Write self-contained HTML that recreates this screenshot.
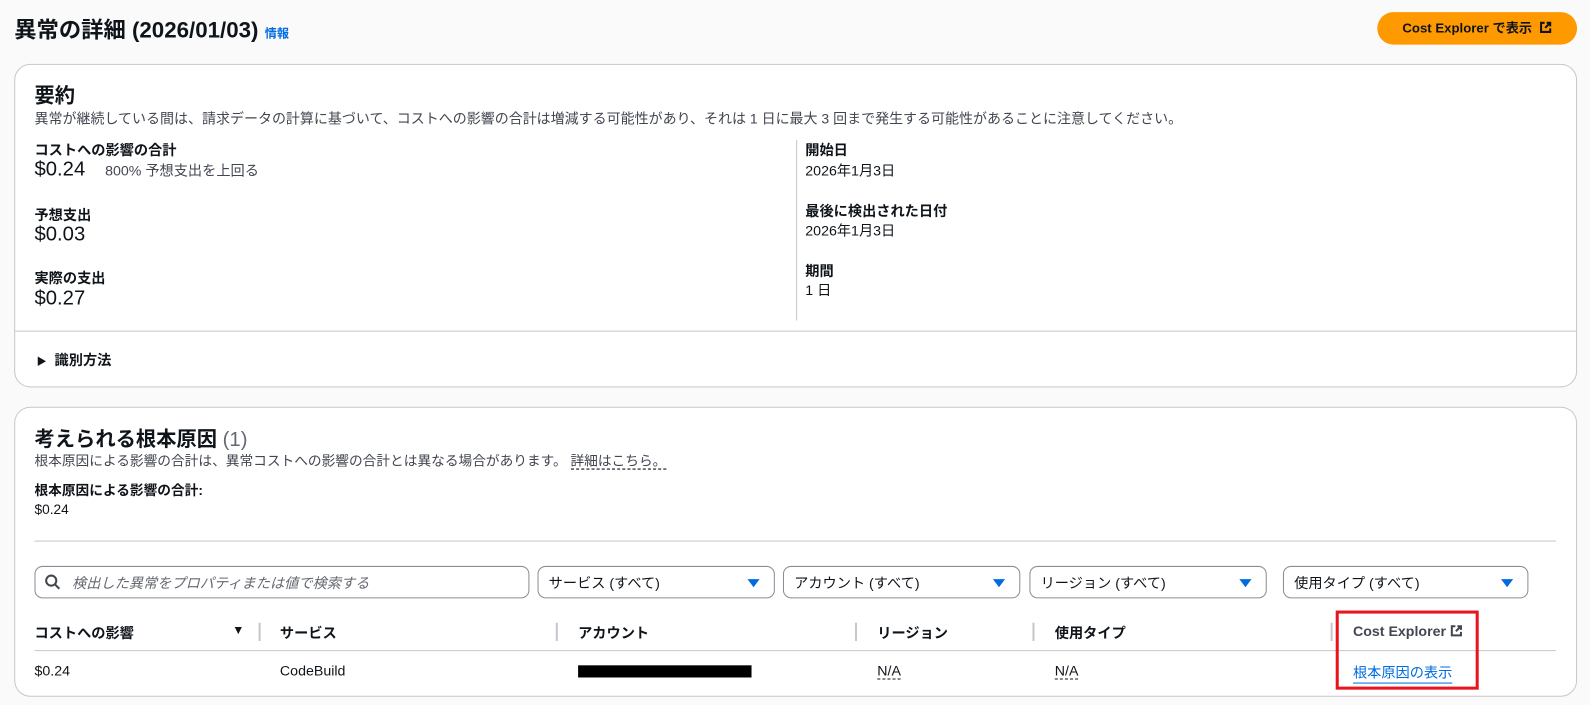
<!DOCTYPE html>
<html><head><meta charset="utf-8"><style>
*{box-sizing:border-box;margin:0;padding:0}
body{width:1590px;height:705px;background:#fafafa;font-family:"Liberation Sans","Noto Sans CJK JP",sans-serif;color:#0f141a;overflow:hidden;font-size:14px}
#w{position:absolute;left:0;top:0;width:1568px;height:695px;transform:scale(1.0142);transform-origin:0 0}
.a{position:absolute;white-space:nowrap}
.card{position:absolute;left:14px;width:1541px;background:#fff;border:1px solid #c6c6cd;border-radius:16px}
.b{font-weight:700}
.sel{position:absolute;top:558px;height:32px;border:1px solid #8c8c94;border-radius:8px;background:#fff;padding:6px 10px;font-size:14px;color:#0f141a}
.sel .tri{position:absolute;right:14px;top:12px;width:0;height:0;border-left:6px solid transparent;border-right:6px solid transparent;border-top:8px solid #006ce0}
.sep{position:absolute;top:614px;width:2px;height:18px;background:#c6c6cd}
.lk{color:#006ce0}
.dot{border-bottom:1px dashed #0f141a}
</style></head><body><div id="w">
<div class="a b" style="left:14px;top:12px;font-size:22px">異常の詳細 (2026/01/03) <span class="lk" style="font-size:12px;font-weight:700">情報</span></div>
<div class="a b" style="left:1358px;top:12px;width:197px;height:32px;background:#ff9900;border-radius:16px;font-size:13px;text-align:center;line-height:32px">Cost Explorer で表示 <svg width="12" height="12" viewBox="0 0 12 12" style="vertical-align:-1px;margin-left:4px"><path d="M5 1.5H1.5v9h9V7M7 1.5h3.5V5M10.5 1.5 5.5 6.5" fill="none" stroke="#0f141a" stroke-width="2"/></svg></div>

<div class="card" style="top:63px;height:319px"></div>
<div class="a b" style="left:34px;top:78px;font-size:20px">要約</div>
<div class="a" style="left:34px;top:106px;font-size:13.8px;color:#424650">異常が継続している間は、請求データの計算に基づいて、コストへの影響の合計は増減する可能性があり、それは 1 日に最大 3 回まで発生する可能性があることに注意してください。</div>
<div class="a b" style="left:34px;top:138px;font-size:14px">コストへの影響の合計</div>
<div class="a" style="left:34px;top:156px;font-size:20px">$0.24 <span style="font-size:14px;color:#424650;margin-left:14px">800% 予想支出を上回る</span></div>
<div class="a b" style="left:34px;top:202px">予想支出</div>
<div class="a" style="left:34px;top:220px;font-size:20px">$0.03</div>
<div class="a b" style="left:34px;top:264px">実際の支出</div>
<div class="a" style="left:34px;top:283px;font-size:20px">$0.27</div>
<div class="a" style="left:785px;top:138px;width:1px;height:178px;background:#c6c6cd"></div>
<div class="a b" style="left:794px;top:138px">開始日</div>
<div class="a" style="left:794px;top:158px">2026年1月3日</div>
<div class="a b" style="left:794px;top:198px">最後に検出された日付</div>
<div class="a" style="left:794px;top:217px">2026年1月3日</div>
<div class="a b" style="left:794px;top:257px">期間</div>
<div class="a" style="left:794px;top:276px">1 日</div>
<div class="a" style="left:15px;top:326px;width:1539px;height:1px;background:#c6c6cd"></div>
<div class="a b" style="left:36px;top:345px;font-size:14px"><span style="font-size:10px">▶</span>&nbsp; 識別方法</div>

<div class="card" style="top:401px;height:286px"></div>
<div class="a b" style="left:34px;top:417px;font-size:20px">考えられる根本原因 <span style="font-weight:400;color:#656871">(1)</span></div>
<div class="a" style="left:34px;top:443px;font-size:13.5px;color:#424650">根本原因による影響の合計は、異常コストへの影響の合計とは異なる場合があります。 <span class="dot">詳細はこちら。</span></div>
<div class="a b" style="left:34px;top:472px;font-size:13.5px">根本原因による影響の合計:</div>
<div class="a" style="left:34px;top:495px;font-size:13.5px">$0.24</div>
<div class="a" style="left:34px;top:533px;width:1500px;height:1px;background:#c6c6cd"></div>

<div class="sel" style="left:34px;width:488px;padding-left:36px;color:#656871;font-style:italic"><svg width="16" height="16" viewBox="0 0 16 16" style="position:absolute;left:9px;top:7px"><circle cx="6.5" cy="6.5" r="5" fill="none" stroke="#424650" stroke-width="2"/><path d="M10 10l4.5 4.5" stroke="#424650" stroke-width="2"/></svg>検出した異常をプロパティまたは値で検索する</div>
<div class="sel" style="left:530px;width:234px">サービス (すべて)<span class="tri"></span></div>
<div class="sel" style="left:772px;width:234px">アカウント (すべて)<span class="tri"></span></div>
<div class="sel" style="left:1015px;width:234px">リージョン (すべて)<span class="tri"></span></div>
<div class="sel" style="left:1265px;width:242px">使用タイプ (すべて)<span class="tri"></span></div>

<div class="a b" style="left:34px;top:614px">コストへの影響</div>
<div class="a" style="left:229px;top:614px;font-size:12px">▼</div>
<div class="sep" style="left:255px"></div>
<div class="a b" style="left:276px;top:614px">サービス</div>
<div class="sep" style="left:548px"></div>
<div class="a b" style="left:570px;top:614px">アカウント</div>
<div class="sep" style="left:843px"></div>
<div class="a b" style="left:865px;top:614px">リージョン</div>
<div class="sep" style="left:1018px"></div>
<div class="a b" style="left:1040px;top:614px">使用タイプ</div>
<div class="sep" style="left:1312px"></div>
<div class="a b" style="left:1334px;top:614px;color:#424650">Cost Explorer <svg width="12" height="12" viewBox="0 0 12 12" style="vertical-align:-1px"><path d="M5 1.5H1.5v9h9V7M7 1.5h3.5V5M10.5 1.5 5.5 6.5" fill="none" stroke="#424650" stroke-width="2"/></svg></div>
<div class="a" style="left:34px;top:641px;width:1500px;height:1px;background:#c6c6cd"></div>
<div class="a" style="left:34px;top:653px">$0.24</div>
<div class="a" style="left:276px;top:653px">CodeBuild</div>
<div class="a" style="left:570px;top:656px;width:171px;height:12px;background:#000"></div>
<div class="a" style="left:865px;top:653px"><span class="dot">N/A</span></div>
<div class="a" style="left:1040px;top:653px"><span class="dot">N/A</span></div>
<div class="a lk" style="left:1334px;top:653px;border-bottom:1px solid #006ce0">根本原因の表示</div>
<div class="a" style="left:1317px;top:602px;width:141px;height:78px;border:3px solid #e8141e"></div>
</div></body></html>
